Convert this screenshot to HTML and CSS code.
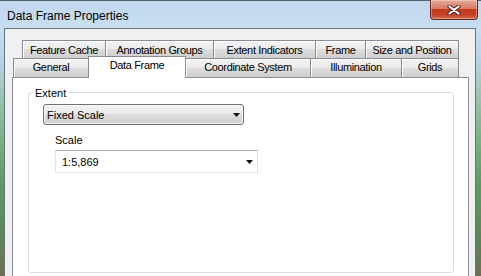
FILE: index.html
```html
<!DOCTYPE html>
<html lang="en">
<head>
    <meta charset="UTF-8">
    <title>Data Frame Properties</title>
    <link rel="stylesheet" href="styles.css">
</head>
<body>
    <div class="titlebar">
        <span class="title">Data Frame Properties</span>
        <button type="button" class="close">
            <svg width="14" height="10" viewBox="0 0 14 10">
                <path d="M2.5 1.5 L11.5 8.5 M11.5 1.5 L2.5 8.5" stroke="#4a1f18" stroke-width="4" stroke-linecap="round"/>
                <path d="M2.5 1.5 L11.5 8.5 M11.5 1.5 L2.5 8.5" stroke="#fff" stroke-width="2.2" stroke-linecap="round"/>
            </svg>
        </button>
    </div>

    <div class="client">
        <div class="tab-row back">
            <div class="tab">Feature Cache</div>
            <div class="tab">Annotation Groups</div>
            <div class="tab">Extent Indicators</div>
            <div class="tab">Frame</div>
            <div class="tab">Size and Position</div>
        </div>
        <div class="tab-row front">
            <div class="tab">General</div>
            <div class="tab active">Data Frame</div>
            <div class="tab">Coordinate System</div>
            <div class="tab">Illumination</div>
            <div class="tab">Grids</div>
        </div>

        <div class="panel">
            <fieldset class="group">
                <legend>Extent</legend>
                <div class="select">
                    <span>Fixed Scale</span>
                    <svg class="arrow" width="7" height="4" viewBox="0 0 7 4"><polygon points="0,0 7,0 3.5,4" fill="#111"/></svg>
                </div>
                <label class="field-label">Scale</label>
                <div class="combo">
                    <span>1:5,869</span>
                    <svg class="arrow" width="7" height="4" viewBox="0 0 7 4"><polygon points="0,0 7,0 3.5,4" fill="#111"/></svg>
                </div>
            </fieldset>
        </div>
    </div>
</body>
</html>
```

FILE: styles.css
```css
* { box-sizing: border-box; }
body {
    margin: 0; width: 481px; height: 276px; overflow: hidden;
    font-family: "Liberation Sans", Arial, sans-serif; font-size: 11px; color: #000;
    background: linear-gradient(#55606b 0, #55606b 1px, #c0d7ee 1px, #c9def2 28px, #b9d3e6 60px, #8fbf9f 110px, #5f9c64 180px, #5b8a58 230px, #6c6f55 276px);
}

/* title bar */
.titlebar { display: flex; justify-content: space-between; align-items: flex-start; height: 28px; }
.title { margin: 9px 0 0 7px; font-size: 12px; line-height: 14px; }
.close {
    display: flex; align-items: center; justify-content: center;
    width: 48px; height: 20px; margin-right: 3px; padding: 0;
    border: 1px solid #5b2a21; border-top: 0; border-radius: 0 0 4px 4px;
    background: linear-gradient(#e8ab9c, #d67a64 45%, #c23a1c 50%, #c5432a 80%, #d8714f);
    box-shadow: inset 0 0 0 1px rgba(255, 255, 255, 0.3);
}

/* client area */
.client {
    height: 248px; margin: 0 5px 0 4px; padding-top: 11px; overflow: hidden;
    border: 1px solid #68737f; border-bottom: 0; background: #f0f0f0;
}
.tab-row { display: grid; }
.tab-row.back { height: 18px; margin-left: 17px; grid-template-columns: 83px 108px 102px 50px 94px; }
.tab-row.front { height: 19px; margin-left: 8px; grid-template-columns: 75px 97px 125px 91px 58px; }
.tab {
    border: 1px solid #898c95; border-right: 0; border-bottom: 0;
    background: linear-gradient(#f2f2f2, #ebebeb 50%, #dddddd 50%, #cfcfcf);
    box-shadow: inset 1px 1px 0 #fff;
    text-align: center; line-height: 13px; letter-spacing: -0.35px; white-space: nowrap;
}
.back .tab { padding-top: 3px; }
.front .tab { padding-top: 2px; }
.tab:last-child { border-right: 1px solid #898c95; }
.tab.active {
    position: relative; z-index: 1; margin: -2px -1px -1px 0;
    border-right: 1px solid #898c95; background: #fff; box-shadow: none;
}

.panel { width: 457px; height: 199px; margin-left: 7px; border: 1px solid #898c95; border-bottom: 0; background: #fff; }

/* group box */
.group {
    height: 188px; margin: 7px 14px 0 15px; padding: 0 0 0 4px;
    border: 1px solid #d5dfe5; border-radius: 3px;
}
.group legend { padding: 2px 2px 0; line-height: 13px; }

.select {
    display: flex; align-items: center; justify-content: space-between;
    width: 201px; height: 21px; margin: 4px 0 0 10px; padding: 0 3px;
    border: 1px solid #707070; border-radius: 3px;
    background: linear-gradient(#f2f2f2, #ebebeb 50%, #dddddd 50%, #cfcfcf);
    box-shadow: inset 0 0 0 1px rgba(255, 255, 255, 0.7);
}
.field-label { display: block; margin: 9px 0 0 22px; line-height: 13px; }
.combo {
    display: flex; align-items: center; justify-content: space-between;
    width: 203px; height: 23px; margin: 3px 0 0 22px; padding: 0 4px 0 6px;
    border: 1px solid; border-color: #abadb3 #dbdfe6 #e3e9ef #e2e3ea; background: #fff;
}
.arrow { display: block; }
```
